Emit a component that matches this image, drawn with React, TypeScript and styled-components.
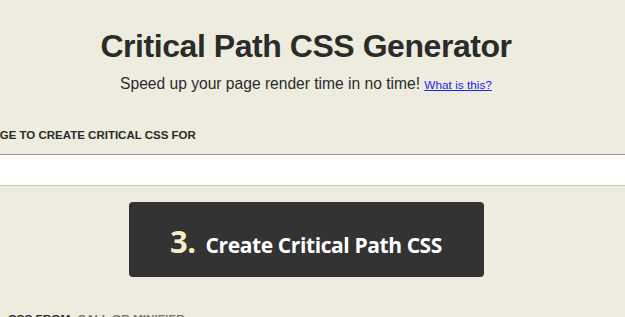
import styled, { createGlobalStyle } from "styled-components";

// palette pulled from the screenshot
const pageBg = "#edecde";
const inkColor = "#2b2b2b";
const buttonBg = "#333333";
const stepColor = "#f4efc4";
const linkColor = "#2424e6";

const GlobalStyle = createGlobalStyle`
  html, body {
    margin: 0;
    padding: 0;
    background: ${pageBg};
    overflow: hidden;
  }
  body {
    font-family: "Liberation Sans", Arial, sans-serif;
    color: ${inkColor};
  }
`;

// the view is a cropped window onto a wider page, so the column runs past both edges
const Page = styled.main`
  width: 760px;
  margin-left: -74px;
  display: flex;
  flex-direction: column;
`;

const Header = styled.header`
  display: flex;
  flex-direction: column;
  align-items: center;
  padding-top: 27px;
`;

const Title = styled.h1`
  margin: 0;
  font-size: 32px;
  line-height: 38px;
  font-weight: 700;
  letter-spacing: -0.45px;
`;

const Subtitle = styled.p`
  margin: 9px 0 0;
  font-size: 15.6px;
  line-height: 20px;
`;

const HelpLink = styled.a`
  font-size: 11.8px;
  color: ${linkColor};
  text-decoration: underline;
`;

const Field = styled.section`
  display: flex;
  flex-direction: column;
  margin-top: 33px;
`;

const Label = styled.label`
  font-size: 11.5px;
  line-height: 14px;
  font-weight: 700;
  text-transform: uppercase;
`;

const UrlInput = styled.input`
  margin-top: 12px;
  height: 32px;
  box-sizing: border-box;
  border: 0;
  border-top: 1px solid #9a9a94;
  border-bottom: 1px solid #c9c8b6;
  background: #ffffff;
  outline: none;
`;

const Actions = styled.div`
  display: flex;
  justify-content: center;
  margin-top: 16px;
`;

const SubmitButton = styled.button`
  width: 355px;
  height: 75px;
  border: 0;
  border-radius: 4px;
  background: ${buttonBg};
  color: #ffffff;
  display: flex;
  align-items: baseline;
  justify-content: center;
  gap: 10px;
  padding: 18px 0 0;
  font-family: "Open Sans", "Noto Sans", sans-serif;
  font-weight: 700;
  cursor: pointer;
`;

const Step = styled.span`
  color: ${stepColor};
  font-size: 31px;
  letter-spacing: -0.5px;
`;

const ButtonText = styled.span`
  font-size: 21px;
  letter-spacing: -0.4px;
`;

const SourceRow = styled.div`
  margin-top: 35px;
  padding-left: 82px;
  font-size: 11.8px;
  line-height: 14px;
  text-transform: uppercase;
`;

const SourceKey = styled.strong`
  font-weight: 700;
`;

const SourceValue = styled.span`
  color: #777770;
  font-weight: 700;
`;

function App() {
  return (
    <>
      <GlobalStyle />
      <Page>
        <Header>
          <Title>Critical Path CSS Generator</Title>
          <Subtitle>
            Speed up your page render time in no time! <HelpLink href="#">What is this?</HelpLink>
          </Subtitle>
        </Header>

        <Field>
          <Label htmlFor="url">2. URL of page to create critical CSS for</Label>
          <UrlInput id="url" type="text" />
        </Field>

        <Actions>
          <SubmitButton type="button">
            <Step>3.</Step>
            <ButtonText>Create Critical Path CSS</ButtonText>
          </SubmitButton>
        </Actions>

        <SourceRow>
          <SourceKey>CSS from:</SourceKey> <SourceValue>Call or minifier</SourceValue>
        </SourceRow>
      </Page>
    </>
  );
}

export default App;
